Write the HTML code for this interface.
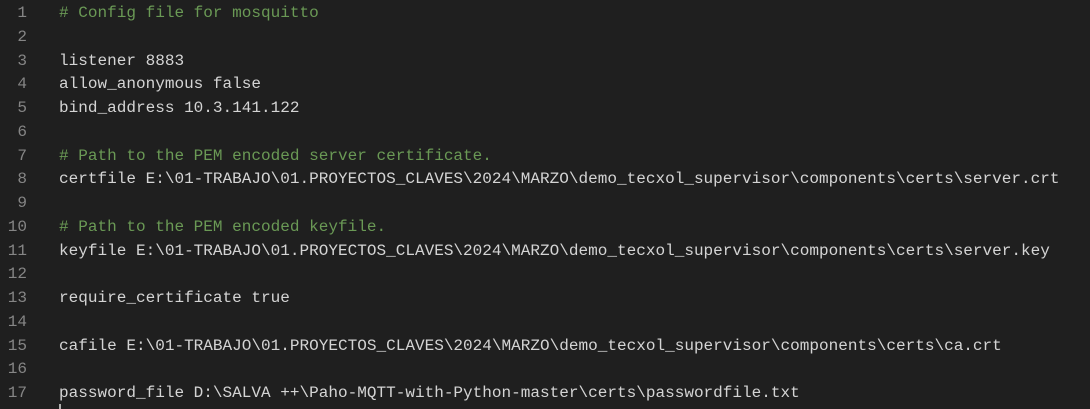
<!DOCTYPE html>
<html><head><style>
body{margin:0;background:#1f1f1f;width:1090px;height:409px;overflow:hidden;font-family:"Liberation Mono",monospace;font-size:16.05px;}
.l{position:absolute;left:0;height:23.75px;line-height:23.75px;white-space:pre;color:#d4d4d4;}
.n{display:inline-block;width:27px;text-align:right;color:#858585;margin-right:32px;}
.c{color:#6a9955}
</style></head><body>
<div style="position:relative;top:1px">
<div class="l" style="top:1px"><span class="n">1</span><span class="c"># Config file for mosquitto</span></div>
<div class="l" style="top:24.75px"><span class="n">2</span></div>
<div class="l" style="top:48.5px"><span class="n">3</span>listener 8883</div>
<div class="l" style="top:72.25px"><span class="n">4</span>allow_anonymous false</div>
<div class="l" style="top:96px"><span class="n">5</span>bind_address 10.3.141.122</div>
<div class="l" style="top:119.75px"><span class="n">6</span></div>
<div class="l" style="top:143.5px"><span class="n">7</span><span class="c"># Path to the PEM encoded server certificate.</span></div>
<div class="l" style="top:167.25px"><span class="n">8</span>certfile E:\01-TRABAJO\01.PROYECTOS_CLAVES\2024\MARZO\demo_tecxol_supervisor\components\certs\server.crt</div>
<div class="l" style="top:191px"><span class="n">9</span></div>
<div class="l" style="top:214.75px"><span class="n">10</span><span class="c"># Path to the PEM encoded keyfile.</span></div>
<div class="l" style="top:238.5px"><span class="n">11</span>keyfile E:\01-TRABAJO\01.PROYECTOS_CLAVES\2024\MARZO\demo_tecxol_supervisor\components\certs\server.key</div>
<div class="l" style="top:262.25px"><span class="n">12</span></div>
<div class="l" style="top:286px"><span class="n">13</span>require_certificate true</div>
<div class="l" style="top:309.75px"><span class="n">14</span></div>
<div class="l" style="top:333.5px"><span class="n">15</span>cafile E:\01-TRABAJO\01.PROYECTOS_CLAVES\2024\MARZO\demo_tecxol_supervisor\components\certs\ca.crt</div>
<div class="l" style="top:357.25px"><span class="n">16</span></div>
<div class="l" style="top:381px"><span class="n">17</span>password_file D:\SALVA ++\Paho-MQTT-with-Python-master\certs\passwordfile.txt</div>
</div>
<div style="position:absolute;left:59px;top:404px;width:2px;height:5px;background:#aeafad"></div>
</body></html>
